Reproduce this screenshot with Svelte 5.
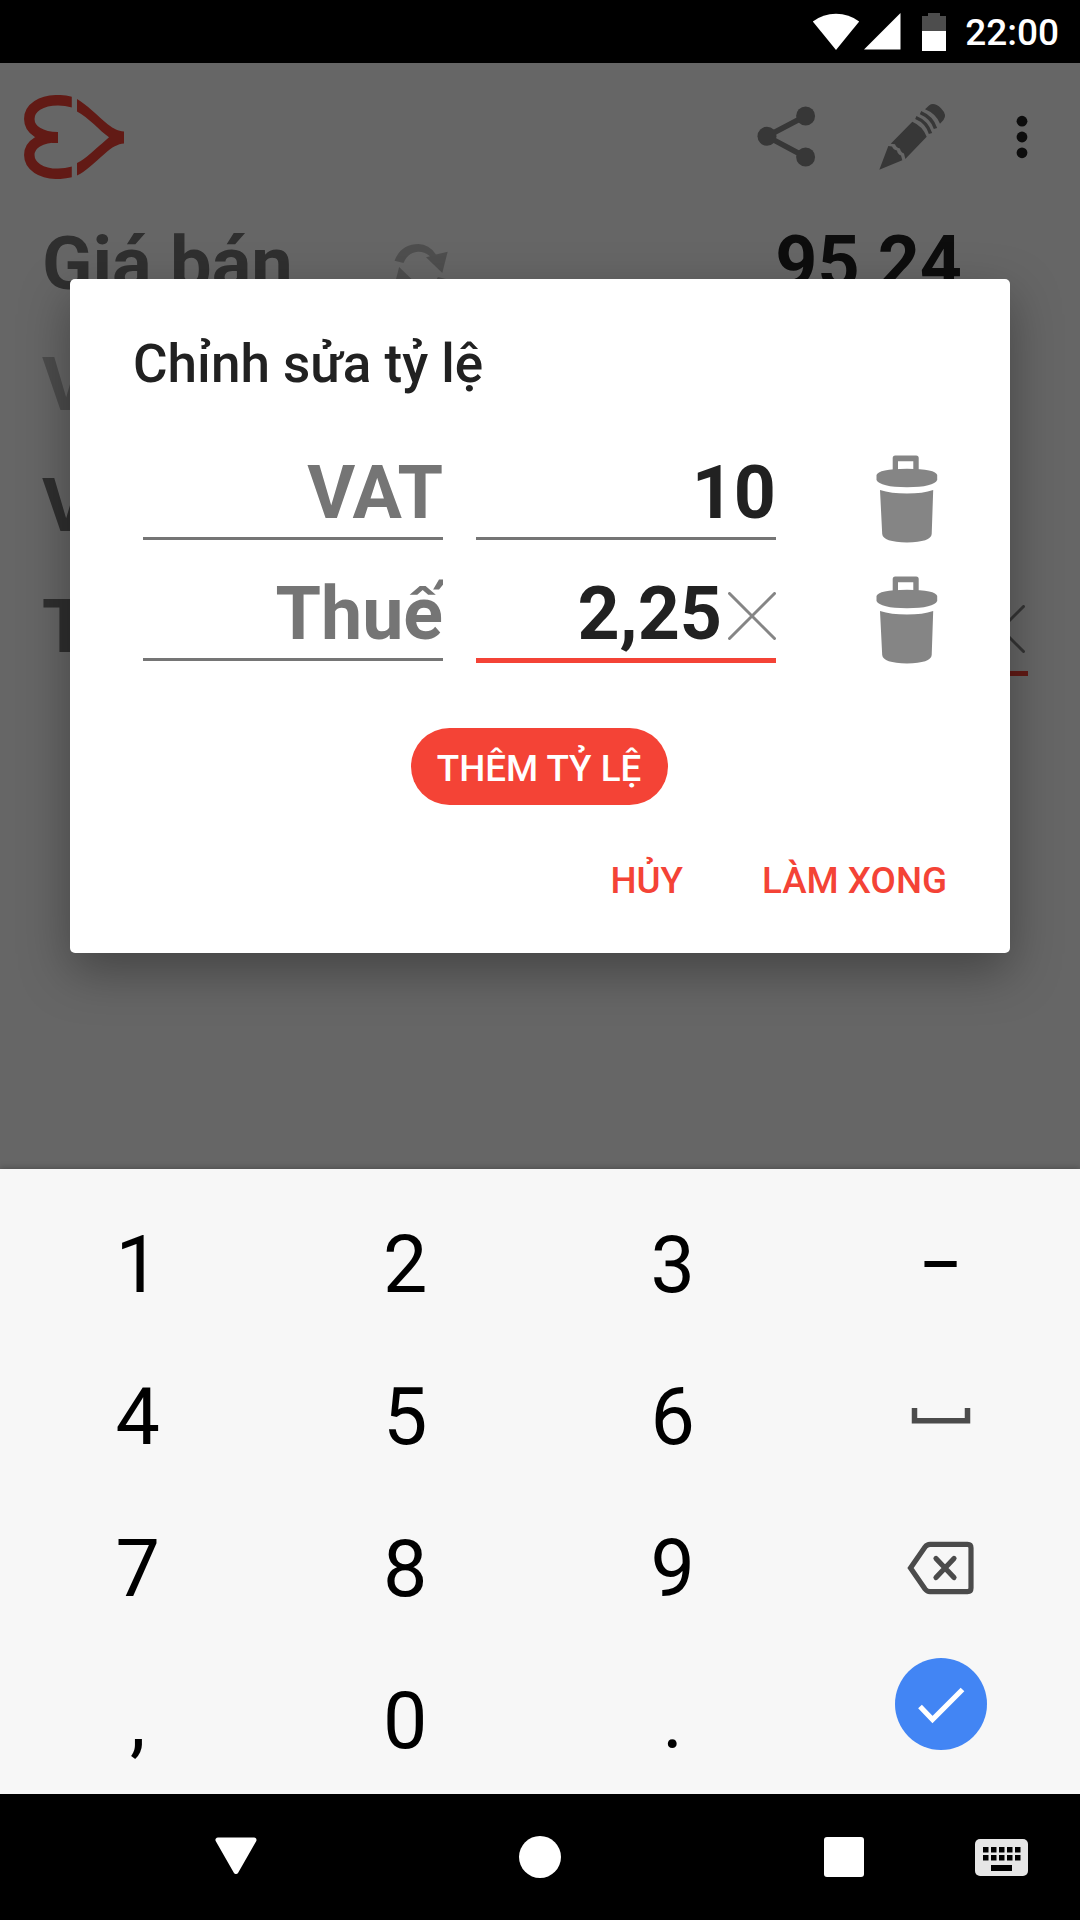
<script lang="ts">
type Rate = { name: string; value: string; focused: boolean };
type Key = { id: string; label?: string; icon?: "space" | "backspace" | "done" };

let rates: Rate[] = [
	{ name: "VAT", value: "10", focused: false },
	{ name: "Thuế", value: "2,25", focused: true }
];

const keys: Key[] = [
	{ id: "1", label: "1" },
	{ id: "2", label: "2" },
	{ id: "3", label: "3" },
	{ id: "minus", label: "−" },
	{ id: "4", label: "4" },
	{ id: "5", label: "5" },
	{ id: "6", label: "6" },
	{ id: "space", icon: "space" },
	{ id: "7", label: "7" },
	{ id: "8", label: "8" },
	{ id: "9", label: "9" },
	{ id: "backspace", icon: "backspace" },
	{ id: "comma", label: "," },
	{ id: "0", label: "0" },
	{ id: "dot", label: "." },
	{ id: "done", icon: "done" }
];

function focusRate(index: number) {
	rates = rates.map((rate, i) => ({ ...rate, focused: i === index }));
}

function removeRate(index: number) {
	rates = rates.filter((_, i) => i !== index);
}

function addRate() {
	rates = [...rates.map((rate) => ({ ...rate, focused: false })), { name: "", value: "", focused: true }];
}

function setValue(value: string) {
	rates = rates.map((rate) => (rate.focused ? { ...rate, value } : rate));
}

function press(key: Key) {
	const current = rates.find((rate) => rate.focused);
	if (!current) return;
	if (key.icon === "backspace") setValue(current.value.slice(0, -1));
	else if (key.label) setValue(current.value + key.label);
}
</script>

<div class="screen">
	<div class="statusbar">
		<svg class="wifi" width="48" height="38" viewBox="0 0 48 38">
			<path d="M24 37L.8 8.500Q11 .7 24 .7T47.200 8.500Z" fill="#fff" />
		</svg>
		<svg class="signal" width="37" height="37" viewBox="0 0 37 37">
			<path d="M36.500 0V36.500H0Z" fill="#fff" />
		</svg>
		<svg class="battery" width="24" height="38" viewBox="0 0 24 38">
			<path d="M6 0H18V3H24V18H0V3H6Z" fill="#4d4d4d" />
			<path d="M0 18H24V38H0Z" fill="#fff" />
		</svg>
		<span class="clock">22:00</span>
	</div>

	<main class="app">
		<div class="toolbar">
			<svg class="logo" width="100" height="84" viewBox="0 0 100 84">
				<clipPath id="lobes"><rect width="47.800" height="84" /></clipPath>
				<path
					d="M54 9C46 6 40 5.200 34 5.200C17 5.200 5.300 13 5.300 24C5.300 35 17 42.300 34 42.300C17 42.300 5.300 49 5.300 60C5.300 71 17 78.800 34 78.800C40 78.800 46 78 54 75"
					fill="none"
					stroke="#f44336"
					stroke-width="10.500"
					clip-path="url(#lobes)"
				/>
				<path
					d="M53 4C62 9 74 21 84 29.500C90 34 94 36 100 36.500V48.500C94 49 88 52 81 58.500C70 68 61 77 53 80.500V68C62 64 71 54 78 48.500L85 42.300C76 36 64 22 53 16.500Z"
					fill="#f44336"
				/>
				<path d="M28 37H34V48H28Z" fill="#f44336" />
			</svg>
			<div class="toolbar-actions">
				<svg width="60" height="62" viewBox="0 0 60 62" fill="#8a8a8a">
					<path d="M48.600 10L10 30.300L48.600 51" fill="none" stroke="#8a8a8a" stroke-width="5.500" />
					<circle cx="10" cy="30.300" r="9.500" />
					<circle cx="48.600" cy="10" r="9.500" />
					<circle cx="48.600" cy="51" r="9.500" />
				</svg>
				<svg class="pencil" width="72" height="72" viewBox="0 0 72 72" fill="#8a8a8a">
					<path d="M3.300 68.700L12.300 45L16 45.500Q17.500 49 21 49.500Q21.500 53 25 54.500L26.300 59.300Z" />
					<path d="M14.700 42.700L36.300 20.700Q46.500 25 50.700 35.700L29.300 58L28 52.500Q24.500 51 24 47.500Q20.500 47 19 43.200Z" />
					<path
						d="M39.800 16.500Q51 21 54.500 32.500M44.500 11.700Q56 16.500 59.500 27.500"
						fill="none"
						stroke="#8a8a8a"
						stroke-width="3.500"
					/>
					<path d="M49 8.200L53 4.500Q58 .7 65 7.200Q71.500 14 67.500 19L64 22.700Q60 12.500 49 8.200Z" />
				</svg>
				<svg class="more" width="12" height="44" viewBox="0 0 12 44" fill="#212121">
					<circle cx="6" cy="6.200" r="5.400" />
					<circle cx="6" cy="22" r="5.400" />
					<circle cx="6" cy="37.800" r="5.400" />
				</svg>
			</div>
		</div>

		<div class="row">
			<span class="row-label">Giá bán</span>
			<svg class="swap" width="58" height="60" viewBox="0 0 58 60" fill="#c4c4c4">
				<path d="M2.500 20.700Q9 4 26.500 4Q37 4 44 14.500L55.700 11.700L50.300 33L34 17.300L38 16.300Q32 11.500 26 11.800Q16 12.500 11.500 23Z" />
				<path
					d="M2.500 20.700Q9 4 26.500 4Q37 4 44 14.500L55.700 11.700L50.300 33L34 17.300L38 16.300Q32 11.500 26 11.800Q16 12.500 11.500 23Z"
					transform="rotate(180 28.700 30)"
				/>
			</svg>
			<span class="row-value">95,24</span>
		</div>
		<div class="row faded"><span class="row-label">V</span></div>
		<div class="row"><span class="row-label">V</span></div>
		<div class="row">
			<span class="row-label">T</span>
			<span class="row-field">
				<svg width="48" height="48" viewBox="0 0 48 48">
					<path d="M1.500 1.500L46.500 46.500M46.500 1.500L1.500 46.500" stroke="#858585" stroke-width="3" stroke-linecap="round" />
				</svg>
			</span>
		</div>

		<div class="scrim">
			<div class="dialog" role="dialog" aria-label="Chỉnh sửa tỷ lệ">
				<h2>Chỉnh sửa tỷ lệ</h2>
				{#each rates as rate, i}
					<div class="rate">
						<div class="field name">{rate.name}</div>
						<button type="button" class="field value" class:focused={rate.focused} on:click={() => focusRate(i)}>
							<span>{rate.value}</span>
							{#if rate.focused}
								<svg class="clear" width="48" height="48" viewBox="0 0 48 48">
									<path d="M1.500 1.500L46.500 46.500M46.500 1.500L1.500 46.500" stroke="#858585" stroke-width="3" stroke-linecap="round" />
								</svg>
							{/if}
						</button>
						<button type="button" class="trash" aria-label="delete" on:click={() => removeRate(i)}>
							<svg width="62" height="88" viewBox="0 0 62 88" fill="#858585">
								<path
									fill-rule="evenodd"
									d="M16.700 17V3Q16.700 .5 19.200 .5H40.200Q42.700 .5 42.700 3V17ZM22 6.300V15H37.300V6.300Z"
								/>
								<path d="M.5 20Q2 14 31 13.700Q60 14 61.200 20V25Q58 32 31 32.300Q4 32 .5 25Z" />
								<path d="M4 35Q15 38.500 31 38.500T57.200 35L55.700 79Q55 87 31 87.500Q7 87 6.200 79Z" />
							</svg>
						</button>
					</div>
				{/each}
				<button type="button" class="add" on:click={addRate}>THÊM TỶ LỆ</button>
				<div class="dialog-actions">
					<button type="button">HỦY</button>
					<button type="button">LÀM XONG</button>
				</div>
			</div>
		</div>
	</main>

	<div class="keyboard">
		{#each keys as key (key.id)}
			<button type="button" class="key" class:text={key.label} aria-label={key.id} on:click={() => press(key)}>
				{#if key.icon === "space"}
					<svg width="60" height="16" viewBox="0 0 60 16">
						<path d="M3.500 0V12.800H56.500V0" fill="none" stroke="#4b4b4b" stroke-width="5.500" />
					</svg>
				{:else if key.icon === "backspace"}
					<svg width="68" height="54" viewBox="0 0 68 54" fill="none" stroke="#4b4b4b" stroke-width="5.200">
						<path d="M3.500 27L18 6Q20 3.400 23 3.400H60.500Q64 3.400 64 7V47Q64 50.600 60.500 50.600H23Q20 50.600 18 48Z" />
						<path d="M29 17.500L47 36.500M47 17.500L29 36.500" stroke-linecap="round" />
					</svg>
				{:else if key.icon === "done"}
					<svg class="done" width="92" height="92" viewBox="0 0 92 92">
						<circle cx="46" cy="46" r="46" fill="#4285f4" />
						<path d="M25 48.500L37.500 61.500L67.500 31.500" fill="none" stroke="#fff" stroke-width="5.200" />
					</svg>
				{:else}
					{key.label}
				{/if}
			</button>
		{/each}
	</div>

	<nav class="navbar">
		<svg width="44" height="42" viewBox="0 0 44 42">
			<path d="M4 4H40L22 35.500Z" fill="#fff" stroke="#fff" stroke-width="5" stroke-linejoin="round" />
		</svg>
		<span class="home"></span>
		<span class="recents"></span>
		<svg class="ime" width="53" height="37" viewBox="0 0 53 37">
			<rect width="53" height="37" rx="5" fill="#e6e6e6" />
			{#each [0, 1, 2, 3, 4] as col}
				<rect x={8 + col * 8} y="8" width="5.500" height="5.500" />
				<rect x={8 + col * 8} y="16" width="5.500" height="5.500" />
			{/each}
			<rect x="16" y="26" width="21" height="6" />
		</svg>
	</nav>
</div>

<style>
:global(body) {
	margin: 0;
}
.screen {
	display: flex;
	flex-direction: column;
	width: 1080px;
	height: 1920px;
	overflow: hidden;
	background: #000;
	font-family: Roboto, "Noto Sans", sans-serif;
}
button {
	background: none;
	border: none;
	padding: 0;
	margin: 0;
	font: inherit;
	color: inherit;
	cursor: pointer;
}
svg {
	display: block;
	flex: none;
}

.statusbar {
	display: flex;
	align-items: center;
	justify-content: flex-end;
	flex: none;
	height: 63px;
	padding-right: 21px;
	color: #fff;
}
.signal {
	margin-left: 4px;
}
.battery {
	margin-left: 21px;
}
.clock {
	margin-left: 19px;
	padding-top: 2px;
	font-size: 37px;
	font-weight: 500;
}

.app {
	position: relative;
	flex: none;
	height: 1106px;
	background: #fff;
	color: #212121;
}
.toolbar {
	display: flex;
	align-items: center;
	justify-content: space-between;
	box-sizing: border-box;
	height: 140px;
	padding: 8px 52px 0 24px;
}
.toolbar-actions {
	display: flex;
	align-items: center;
	margin-top: -1px;
}
.pencil {
	margin-left: 59px;
}
.more {
	margin-left: 68px;
}
.row {
	display: flex;
	align-items: flex-start;
	height: 121px;
	padding: 0 52px 0 42px;
	font-size: 74px;
	font-weight: 700;
	line-height: 121px;
}
.row-label {
	width: 350px;
	color: #757575;
}
.faded .row-label {
	color: #bdbdbd;
}
.swap {
	margin-top: 37px;
}
.row-value {
	flex: 1;
	text-align: right;
	padding-right: 66px;
	font-size: 73.5px;
}
.row-field {
	display: flex;
	justify-content: flex-end;
	box-sizing: border-box;
	width: 300px;
	height: 110px;
	margin-left: auto;
	padding: 39px 3px 0 0;
	border-bottom: 5px solid #f44336;
}

.scrim {
	position: absolute;
	inset: 0;
	display: flex;
	justify-content: center;
	align-items: flex-start;
	padding-top: 216px;
	background: rgba(0, 0, 0, 0.6);
}
.dialog {
	display: flex;
	flex-direction: column;
	box-sizing: border-box;
	width: 940px;
	height: 674px;
	padding-top: 54px;
	border-radius: 5px;
	background: #fff;
	box-shadow: 0 18px 50px rgba(0, 0, 0, 0.34);
}
h2 {
	margin: 0 0 37px;
	padding-left: 63px;
	font-size: 53px;
	font-weight: 500;
	line-height: 62px;
}
.rate {
	display: flex;
	align-items: flex-start;
	height: 121px;
	padding-left: 73px;
	font-size: 73.5px;
	font-weight: 700;
}
.field {
	box-sizing: border-box;
	width: 300px;
	height: 108px;
	padding-top: 16px;
	border-bottom: 3px solid #757575;
	line-height: 90px;
	text-align: right;
	overflow: hidden;
}
.field.name {
	color: #757575;
}
.field.value {
	display: flex;
	align-items: center;
	justify-content: flex-end;
	margin-left: 33px;
}
.field.value.focused {
	height: 110px;
	border-bottom: 5px solid #f44336;
}
.clear {
	margin-left: 6px;
	margin-top: 5px;
}
.trash {
	margin: 23px 0 0 100px;
}
.add {
	align-self: center;
	width: 257px;
	height: 77px;
	margin: 54px 2px 0 0;
	padding-top: 3px;
	border-radius: 39px;
	background: #f44336;
	color: #fff;
	font-size: 36.75px;
	font-weight: 500;
}
.dialog-actions {
	display: flex;
	justify-content: flex-end;
	gap: 79px;
	height: 60px;
	margin-top: 45px;
	padding-right: 63px;
	color: #f44336;
	font-size: 36.75px;
	font-weight: 500;
}

.keyboard {
	position: relative;
	display: grid;
	grid-template-columns: repeat(4, 267.5px);
	grid-auto-rows: 152px;
	box-sizing: border-box;
	flex: none;
	height: 625px;
	padding: 19px 5px 0;
	background: #f7f7f7;
	box-shadow: 0 -1px 6px rgba(0, 0, 0, 0.25);
}
.key {
	display: flex;
	align-items: center;
	justify-content: center;
	color: #000;
	font-size: 79px;
	line-height: 152px;
}
.key.text {
	padding: 2px 2px 0 0;
}
.done {
	margin-bottom: 32px;
}

.navbar {
	display: flex;
	align-items: center;
	flex: 1;
	padding-left: 214px;
}
.home {
	width: 42px;
	height: 42px;
	margin-left: 261px;
	border-radius: 50%;
	background: #fff;
}
.recents {
	width: 40px;
	height: 40px;
	margin-left: 263px;
	border-radius: 3px;
	background: #fff;
}
.ime {
	margin-left: 111px;
}
</style>
